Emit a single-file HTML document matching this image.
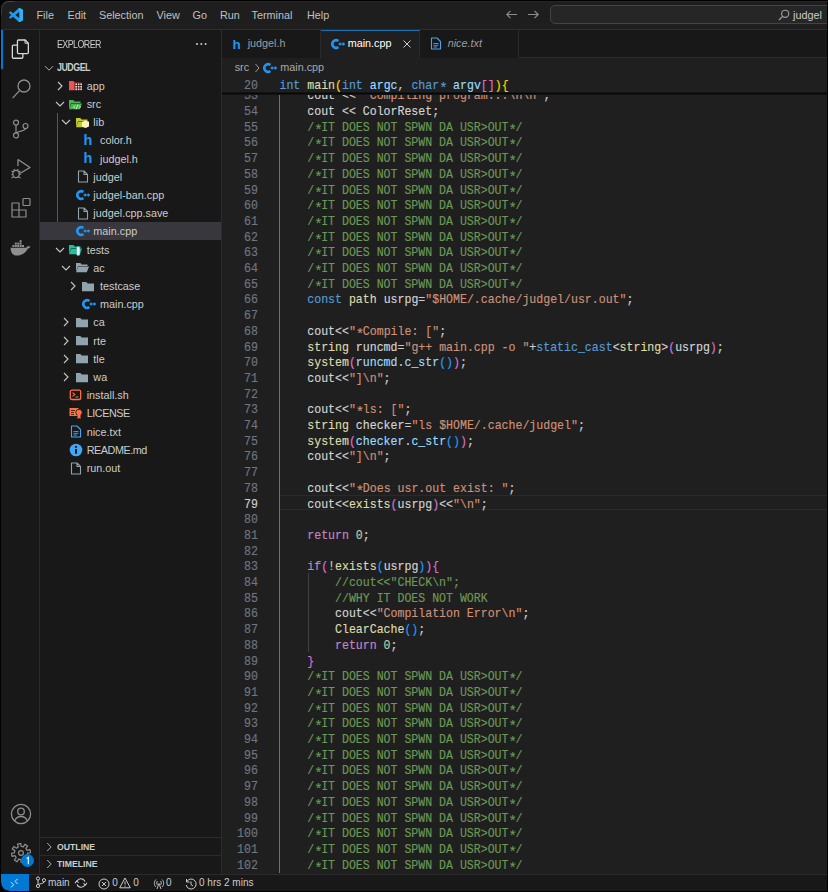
<!DOCTYPE html><html><head><meta charset="utf-8"><style>
*{margin:0;padding:0;box-sizing:border-box}
html,body{width:828px;height:892px;overflow:hidden;background:#000}
body{position:relative;font-family:"Liberation Sans",sans-serif;color:#ccc}
.a{position:absolute}
#win{position:absolute;left:0;top:0;width:827px;height:891px;border-radius:9px 0 0 9px;overflow:hidden;background:#181818}
#title{left:0;top:0;width:827px;height:29.7px;background:#1e1e1e;border-bottom:1px solid #2b2b2b}
.menu{top:0;height:29px;line-height:30px;font-size:10.8px;color:#c0c0c0;white-space:nowrap}
#act{left:0;top:29px;width:40px;height:845px;background:#181818;border-right:1px solid #2b2b2b}
#side{left:40px;top:29px;width:181.7px;height:845px;background:#181818;border-right:1px solid #2b2b2b}
#edit{left:221.7px;top:29px;width:606px;height:845px;background:#1f1f1f}
#tabs{left:0;top:0;width:606px;height:29px;background:#181818;border-bottom:1px solid #2b2b2b}
.tab{top:0;height:29px;background:#181818;border-right:1px solid #2b2b2b;font-size:10.8px;line-height:29px;white-space:nowrap}
#status{left:0;top:874px;width:827px;height:17px;background:#181818;border-top:1px solid #2b2b2b;font-size:10px;color:#ccc}
#status div.a{margin-top:-0.8px}
.row{position:absolute;left:0;width:181px;height:18.2px;line-height:18.2px;font-size:10.8px;color:#cccccc;white-space:nowrap}
.row span.t{position:absolute;top:0}
.code{position:absolute;left:57.8px;font-family:"Liberation Mono",monospace;font-size:11.57px;white-space:pre;color:#cccccc;height:15.73px;line-height:15.73px;transform:translateY(1.5px) scaleY(1.06);-webkit-text-stroke:0.15px}
.ln{position:absolute;left:0;width:36.3px;text-align:right;font-family:"Liberation Mono",monospace;font-size:11.6px;color:#6e7681;height:15.73px;line-height:15.73px;transform:translateY(1.4px) scaleY(1.1);-webkit-text-stroke:0.15px}
.k{color:#569cd6}.c{color:#c586c0}.s{color:#ce9178}.m{color:#6a9955}.n{color:#b5cea8}.f{color:#dcdcaa}.v{color:#9cdcfe}.d{color:#d4d4d4}
.as{position:relative;top:3.6px;font-size:14px;letter-spacing:-1.46px}
.b1{color:#ffd700}.b2{color:#da70d6}.b3{color:#179fff}
</style></head><body><div id="win"><div id="title" class="a"><svg class="a" style="left:8.7px;top:7.6px" width="14" height="14" viewBox="0 0 100 100"><path d="M96.46 10.8 L75.86 0.87 C73.48 -0.27 70.63 0.21 68.76 2.08 L29.35 38.04 L12.19 25.01 C10.59 23.8 8.35 23.9 6.87 25.25 L1.36 30.26 C-0.45 31.91 -0.46 34.76 1.35 36.42 L16.24 50 L1.35 63.58 C-0.46 65.24 -0.45 68.09 1.36 69.74 L6.87 74.75 C8.35 76.1 10.59 76.2 12.19 74.99 L29.35 61.96 L68.76 97.92 C70.63 99.79 73.48 100.27 75.86 99.13 L96.46 89.2 C98.62 88.16 100 85.97 100 83.57 V16.43 C100 14.03 98.62 11.84 96.46 10.8 Z M75.02 72.7 L45.11 50 L75.02 27.3 V72.7 Z" fill="#1a9bf0"/><path d="M96.46 10.8 L75.86 0.87 C73.48 -0.27 70.63 0.21 68.76 2.08 L75.02 27.3 V72.7 L68.76 97.92 C70.63 99.79 73.48 100.27 75.86 99.13 L96.46 89.2 C98.62 88.16 100 85.97 100 83.57 V16.43 C100 14.03 98.62 11.84 96.46 10.8 Z" fill="#35aef8"/></svg><div class="a menu" style="left:36.5px">File</div><div class="a menu" style="left:67.5px">Edit</div><div class="a menu" style="left:99px">Selection</div><div class="a menu" style="left:156.5px">View</div><div class="a menu" style="left:192.5px">Go</div><div class="a menu" style="left:220px">Run</div><div class="a menu" style="left:251.5px">Terminal</div><div class="a menu" style="left:307px">Help</div><svg class="a" style="left:504.5px;top:9.2px" width="14" height="12" viewBox="0 0 14 12" ><path d="M5.5 1.8 L1.8 5.5 L5.5 9.2 M1.8 5.5 H12" stroke="#8c8c8c" stroke-width="1.15" fill="none"/></svg><svg class="a" style="left:526px;top:9.2px" width="14" height="12" viewBox="0 0 14 12" ><path d="M8.5 1.8 L12.2 5.5 L8.5 9.2 M12.2 5.5 H2" stroke="#8c8c8c" stroke-width="1.15" fill="none"/></svg><div class="a" style="left:550px;top:5px;width:300px;height:19px;background:#262626;border:1.3px solid #434343;border-radius:5px;margin-top:-0.4px"></div><svg class="a" style="left:778px;top:9px" width="12" height="12" viewBox="0 0 12 12" ><circle cx="7.2" cy="4.8" r="3.6" stroke="#a0a0a0" stroke-width="1.1" fill="none"/><path d="M4.6 7.4 L1 11" stroke="#a0a0a0" stroke-width="1.2"/></svg><div class="a menu" style="left:793px;top:0;color:#cccccc">judgel</div></div><div id="act" class="a"><div class="a" style="left:1px;top:0px;width:2px;height:40px;background:#0078d4"></div><svg class="a" style="left:10px;top:9px" width="22" height="22" viewBox="0 0 22 22" ><path d="M7.45 3 a1 1 0 0 1 1 -1 H15.2 L18.35 5.2 V14.55 a1 1 0 0 1 -1 1 H8.45 a1 1 0 0 1 -1 -1 Z" stroke="#d7d7d7" stroke-width="1.3" fill="none"/><path d="M15 2 V4.2 a1 1 0 0 0 1 1 H18.3" stroke="#d7d7d7" stroke-width="1.1" fill="none"/><path d="M7.45 7.05 H3.35 a1 1 0 0 0 -1 1 V19.25 a1 1 0 0 0 1 1 H11.85 a1 1 0 0 0 1 -1 V15.6" stroke="#d7d7d7" stroke-width="1.3" fill="none"/></svg><svg class="a" style="left:10.5px;top:50px" width="22" height="22" viewBox="0 0 22 22" ><circle cx="13" cy="7" r="6" stroke="#8e8e8e" stroke-width="1.3" fill="none"/><path d="M8.8 11.4 L1.6 19.1" stroke="#8e8e8e" stroke-width="1.35"/></svg><svg class="a" style="left:11px;top:89.5px" width="20" height="20" viewBox="0 0 20 20" ><circle cx="5" cy="3.6" r="2.5" stroke="#8e8e8e" stroke-width="1.2" fill="none"/><circle cx="5" cy="16.4" r="2.5" stroke="#8e8e8e" stroke-width="1.2" fill="none"/><circle cx="14.5" cy="7" r="2.5" stroke="#8e8e8e" stroke-width="1.2" fill="none"/><path d="M5 6.1 V13.9 M14.5 9.5 C14.5 12.5 7 11.5 5.5 13.9" stroke="#8e8e8e" stroke-width="1.2" fill="none"/></svg><svg class="a" style="left:9.5px;top:129px" width="22" height="22" viewBox="0 0 22 22" ><path d="M8 1.5 L20 9.5 L9 16" stroke="#8e8e8e" stroke-width="1.3" fill="none" stroke-linejoin="round"/><path d="M8 1.5 V8" stroke="#8e8e8e" stroke-width="1.3"/><ellipse cx="6" cy="16" rx="3.2" ry="3.6" stroke="#8e8e8e" stroke-width="1.2" fill="none"/><path d="M1.5 13 L3.5 14 M1.5 16.5 H3 M1.5 20 L3.5 18.8 M10.5 13 L8.5 14 M10.5 16.5 H9 M10.5 20 L8.5 18.8 M4.5 12.2 L3.8 11 M7.5 12.2 L8.2 11" stroke="#8e8e8e" stroke-width="1.1"/></svg><svg class="a" style="left:9.5px;top:167.6px" width="22" height="22" viewBox="0 0 22 22" ><path d="M2 6 H9 V13 H2 Z M2 13 H9 V20 H2 Z M9 13 H16 V20 H9 Z" stroke="#8e8e8e" stroke-width="1.2" fill="none" stroke-linejoin="round"/><rect x="13" y="1.5" width="7" height="7" rx="0.8" stroke="#8e8e8e" stroke-width="1.2" fill="none"/></svg><svg class="a" style="left:10px;top:209px" width="21" height="18" viewBox="0 0 21 18" ><path d="M0.6 9.7 H16.4 C16.9 8.4 18.4 7.9 20.4 8.7 C19.9 9.9 18.9 10.5 17.9 10.6 C16 15.2 11 17.6 6.8 17.6 C2.6 17.6 0.6 14.2 0.6 9.7 Z" fill="#8e8e8e"/><rect x="9.6" y="2.2" width="2" height="2" fill="#8e8e8e"/><rect x="4.8" y="4.6" width="2" height="2" fill="#8e8e8e"/><rect x="7.2" y="4.6" width="2" height="2" fill="#8e8e8e"/><rect x="9.6" y="4.6" width="2" height="2" fill="#8e8e8e"/><rect x="2.4" y="7.0" width="2" height="2" fill="#8e8e8e"/><rect x="4.8" y="7.0" width="2" height="2" fill="#8e8e8e"/><rect x="7.2" y="7.0" width="2" height="2" fill="#8e8e8e"/><rect x="9.6" y="7.0" width="2" height="2" fill="#8e8e8e"/><rect x="12.0" y="7.0" width="2" height="2" fill="#8e8e8e"/></svg><svg class="a" style="left:9.5px;top:774px" width="22" height="22" viewBox="0 0 22 22" ><circle cx="11" cy="11" r="9.6" stroke="#8e8e8e" stroke-width="1.3" fill="none"/><circle cx="11" cy="8.5" r="3.3" stroke="#8e8e8e" stroke-width="1.3" fill="none"/><path d="M4.6 18 C6 14.5 8 13.5 11 13.5 C14 13.5 16 14.5 17.4 18" stroke="#8e8e8e" stroke-width="1.3" fill="none"/></svg><svg class="a" style="left:10.5px;top:814px" width="20" height="20" viewBox="0 0 20 20" ><path d="M18.96 6.56 L19.60 9.75 L16.60 10.17 L16.16 12.36 L18.77 13.91 L16.96 16.61 L14.54 14.79 L12.69 16.03 L13.44 18.96 L10.25 19.60 L9.83 16.60 L7.64 16.16 L6.09 18.77 L3.39 16.96 L5.21 14.54 L3.97 12.69 L1.04 13.44 L0.40 10.25 L3.40 9.83 L3.84 7.64 L1.23 6.09 L3.04 3.39 L5.46 5.21 L7.31 3.97 L6.56 1.04 L9.75 0.40 L10.17 3.40 L12.36 3.84 L13.91 1.23 L16.61 3.04 L14.79 5.46 L16.03 7.31 Z" stroke="#8e8e8e" stroke-width="1.2" fill="none" stroke-linejoin="round"/><circle cx="10" cy="10" r="2.4" stroke="#8e8e8e" stroke-width="1.2" fill="none"/></svg><div class="a" style="left:20.6px;top:824.5px;width:13.5px;height:13.5px;border-radius:50%;background:#0078d4"></div><svg class="a" style="left:20.6px;top:824.5px" width="13.5" height="13.5" viewBox="0 0 13.5 13.5" ><path d="M5.6 4.6 L7.3 3.4 V10.2" stroke="#fff" stroke-width="1.1" fill="none"/></svg></div><div id="side" class="a"><div class="a" style="left:17px;top:9.2px;font-size:8.9px;letter-spacing:-0.55px;line-height:14px;color:#cccccc;transform:scaleY(1.13)">EXPLORER</div><div class="a" style="left:156.3px;top:14.3px;width:2.2px;height:2.2px;background:#ccc;border-radius:50%;box-shadow:4.3px 0 0 #ccc,8.6px 0 0 #ccc"></div><div class="a" style="left:17px;top:30.8px;font-size:8.9px;letter-spacing:-0.5px;line-height:14px;font-weight:bold;color:#cccccc;transform:translateY(1px) scaleY(1.13)">JUDGEL</div><svg class="a" style="left:4px;top:33.5px" width="10" height="10" viewBox="0 0 10 10" ><path d="M1 3.2 L5 7.2 L9 3.2" stroke="#b8b8b8" stroke-width="0.95" fill="none"/></svg><div class="a" style="left:17.4px;top:83.6px;width:1px;height:127.4px;background:#585858"></div><div class="row" style="top:47.70px;"><span class="t" style="left:46.70px;">app</span></div><svg class="a" style="left:14.7px;top:51.800000000000004px" width="10" height="10" viewBox="0 0 10 10" ><path d="M3 1 L7 5 L3 9" stroke="#c5c5c5" stroke-width="1.1" fill="none"/></svg><svg class="a" style="left:28.0px;top:50.300000000000004px" width="15" height="13" viewBox="0 0 15 13" ><path d="M1 2 H5.3 L6.7 3.4 H13 V11.3 H1 Z" fill="#ef5350"/><rect x="6.6" y="3.6" width="7.4" height="8" fill="#181818"/><rect x="7.3" y="4.4" width="1.7" height="1.7" fill="#f4d6d5"/><rect x="7.3" y="6.9" width="1.7" height="1.7" fill="#f4d6d5"/><rect x="7.3" y="9.4" width="1.7" height="1.7" fill="#f4d6d5"/><rect x="9.8" y="4.4" width="1.7" height="1.7" fill="#f4d6d5"/><rect x="9.8" y="6.9" width="1.7" height="1.7" fill="#f4d6d5"/><rect x="9.8" y="9.4" width="1.7" height="1.7" fill="#f4d6d5"/><rect x="12.3" y="4.4" width="1.7" height="1.7" fill="#f4d6d5"/><rect x="12.3" y="6.9" width="1.7" height="1.7" fill="#f4d6d5"/><rect x="12.3" y="9.4" width="1.7" height="1.7" fill="#f4d6d5"/></svg><div class="row" style="top:65.90px;"><span class="t" style="left:46.70px;">src</span></div><svg class="a" style="left:14.7px;top:70.0px" width="10" height="10" viewBox="0 0 10 10" ><path d="M1 3 L5 7 L9 3" stroke="#c5c5c5" stroke-width="1.1" fill="none"/></svg><svg class="a" style="left:28.0px;top:68.5px" width="15" height="13" viewBox="0 0 15 13" ><path d="M1 2 H5.3 L6.7 3.4 H12.5 V5 H3.2 L1 10.8 Z" fill="#4caf50"/><path d="M3.3 5.6 H14 L11.8 11.3 H1 Z" fill="#4caf50"/><path d="M7 7.5 L5.5 9 L7 10.5 M11 7.5 L12.5 9 L11 10.5 M9.8 6.8 L8.2 11.2" stroke="#c8f5c8" stroke-width="1" fill="none"/></svg><div class="row" style="top:84.10px;"><span class="t" style="left:53.35px;">lib</span></div><svg class="a" style="left:21.349999999999998px;top:88.19999999999999px" width="10" height="10" viewBox="0 0 10 10" ><path d="M1 3 L5 7 L9 3" stroke="#c5c5c5" stroke-width="1.1" fill="none"/></svg><svg class="a" style="left:34.65px;top:86.69999999999999px" width="15" height="13" viewBox="0 0 15 13" ><path d="M1 2 H5.3 L6.7 3.4 H12.5 V5 H3.2 L1 10.8 Z" fill="#c0ca33"/><path d="M3.3 5.6 H14 L11.8 11.3 H1 Z" fill="#c0ca33"/><path d="M7 6 L10.5 4.5 L14 6 V10.5 L10.5 12 L7 10.5 Z" fill="#fff3c4"/></svg><div class="row" style="top:102.30px;"><span class="t" style="left:60.00px;">color.h</span></div><div class="a" style="left:43.599999999999994px;top:102.8px;font-size:14.5px;line-height:17px;font-weight:bold;color:#2196f3">h</div><div class="row" style="top:120.50px;"><span class="t" style="left:60.00px;">judgel.h</span></div><div class="a" style="left:43.599999999999994px;top:121.0px;font-size:14.5px;line-height:17px;font-weight:bold;color:#2196f3">h</div><div class="row" style="top:138.70px;"><span class="t" style="left:53.35px;">judgel</span></div><svg class="a" style="left:36.65px;top:141.29999999999998px" width="12" height="13" viewBox="0 0 12 13" ><path d="M1.5 1 H7 L10.5 4.5 V12 H1.5 Z M7 1 V4.5 H10.5" stroke="#90a4ae" stroke-width="1.1" fill="none" stroke-linejoin="round"/></svg><div class="row" style="top:156.90px;"><span class="t" style="left:53.35px;">judgel-ban.cpp</span></div><svg class="a" style="left:35.65px;top:159.99999999999997px" width="14" height="12" viewBox="0 0 14 12" ><path d="M7.4 3.1 A3.7 3.7 0 1 0 7.4 8.9" stroke="#2196f3" stroke-width="2.6" fill="none"/><path d="M7.6 6 H10.6 M9.1 4.5 V7.5 M10.9 6 H13.9 M12.4 4.5 V7.5" stroke="#2196f3" stroke-width="1.3"/></svg><div class="row" style="top:175.10px;"><span class="t" style="left:53.35px;">judgel.cpp.save</span></div><svg class="a" style="left:36.65px;top:177.7px" width="12" height="13" viewBox="0 0 12 13" ><path d="M1.5 1 H7 L10.5 4.5 V12 H1.5 Z M7 1 V4.5 H10.5" stroke="#90a4ae" stroke-width="1.1" fill="none" stroke-linejoin="round"/></svg><div class="row" style="top:193.30px;background:#37373d;"><span class="t" style="left:53.35px;">main.cpp</span></div><svg class="a" style="left:35.65px;top:196.4px" width="14" height="12" viewBox="0 0 14 12" ><path d="M7.4 3.1 A3.7 3.7 0 1 0 7.4 8.9" stroke="#2196f3" stroke-width="2.6" fill="none"/><path d="M7.6 6 H10.6 M9.1 4.5 V7.5 M10.9 6 H13.9 M12.4 4.5 V7.5" stroke="#2196f3" stroke-width="1.3"/></svg><div class="row" style="top:211.50px;"><span class="t" style="left:46.70px;">tests</span></div><svg class="a" style="left:14.7px;top:215.6px" width="10" height="10" viewBox="0 0 10 10" ><path d="M1 3 L5 7 L9 3" stroke="#c5c5c5" stroke-width="1.1" fill="none"/></svg><svg class="a" style="left:28.0px;top:214.1px" width="15" height="13" viewBox="0 0 15 13" ><path d="M1 2 H5.3 L6.7 3.4 H12.5 V5 H3.2 L1 10.8 Z" fill="#22bf9c"/><path d="M3.3 5.6 H14 L11.8 11.3 H1 Z" fill="#22bf9c"/><rect x="8.5" y="3.5" width="3.5" height="9" rx="1.5" fill="#e0f7fa" stroke="#26a69a" stroke-width="0.6"/></svg><div class="row" style="top:229.70px;"><span class="t" style="left:53.35px;">ac</span></div><svg class="a" style="left:21.349999999999998px;top:233.79999999999998px" width="10" height="10" viewBox="0 0 10 10" ><path d="M1 3 L5 7 L9 3" stroke="#c5c5c5" stroke-width="1.1" fill="none"/></svg><svg class="a" style="left:34.65px;top:232.29999999999998px" width="15" height="13" viewBox="0 0 15 13" ><path d="M1 2 H5.3 L6.7 3.4 H12.5 V5 H3.2 L1 10.8 Z" fill="#90a4ae"/><path d="M3.3 5.6 H14 L11.8 11.3 H1 Z" fill="#90a4ae"/></svg><div class="row" style="top:247.90px;"><span class="t" style="left:60.00px;">testcase</span></div><svg class="a" style="left:28.0px;top:252.0px" width="10" height="10" viewBox="0 0 10 10" ><path d="M3 1 L7 5 L3 9" stroke="#c5c5c5" stroke-width="1.1" fill="none"/></svg><svg class="a" style="left:41.3px;top:250.5px" width="15" height="13" viewBox="0 0 15 13" ><path d="M1 2 H5.3 L6.7 3.4 H13 V11.3 H1 Z" fill="#90a4ae"/></svg><div class="row" style="top:266.10px;"><span class="t" style="left:60.00px;">main.cpp</span></div><svg class="a" style="left:42.3px;top:269.2px" width="14" height="12" viewBox="0 0 14 12" ><path d="M7.4 3.1 A3.7 3.7 0 1 0 7.4 8.9" stroke="#2196f3" stroke-width="2.6" fill="none"/><path d="M7.6 6 H10.6 M9.1 4.5 V7.5 M10.9 6 H13.9 M12.4 4.5 V7.5" stroke="#2196f3" stroke-width="1.3"/></svg><div class="row" style="top:284.30px;"><span class="t" style="left:53.35px;">ca</span></div><svg class="a" style="left:21.349999999999998px;top:288.40000000000003px" width="10" height="10" viewBox="0 0 10 10" ><path d="M3 1 L7 5 L3 9" stroke="#c5c5c5" stroke-width="1.1" fill="none"/></svg><svg class="a" style="left:34.65px;top:286.90000000000003px" width="15" height="13" viewBox="0 0 15 13" ><path d="M1 2 H5.3 L6.7 3.4 H13 V11.3 H1 Z" fill="#90a4ae"/></svg><div class="row" style="top:302.50px;"><span class="t" style="left:53.35px;">rte</span></div><svg class="a" style="left:21.349999999999998px;top:306.6px" width="10" height="10" viewBox="0 0 10 10" ><path d="M3 1 L7 5 L3 9" stroke="#c5c5c5" stroke-width="1.1" fill="none"/></svg><svg class="a" style="left:34.65px;top:305.1px" width="15" height="13" viewBox="0 0 15 13" ><path d="M1 2 H5.3 L6.7 3.4 H13 V11.3 H1 Z" fill="#90a4ae"/></svg><div class="row" style="top:320.70px;"><span class="t" style="left:53.35px;">tle</span></div><svg class="a" style="left:21.349999999999998px;top:324.8px" width="10" height="10" viewBox="0 0 10 10" ><path d="M3 1 L7 5 L3 9" stroke="#c5c5c5" stroke-width="1.1" fill="none"/></svg><svg class="a" style="left:34.65px;top:323.3px" width="15" height="13" viewBox="0 0 15 13" ><path d="M1 2 H5.3 L6.7 3.4 H13 V11.3 H1 Z" fill="#90a4ae"/></svg><div class="row" style="top:338.90px;"><span class="t" style="left:53.35px;">wa</span></div><svg class="a" style="left:21.349999999999998px;top:343.0px" width="10" height="10" viewBox="0 0 10 10" ><path d="M3 1 L7 5 L3 9" stroke="#c5c5c5" stroke-width="1.1" fill="none"/></svg><svg class="a" style="left:34.65px;top:341.5px" width="15" height="13" viewBox="0 0 15 13" ><path d="M1 2 H5.3 L6.7 3.4 H13 V11.3 H1 Z" fill="#90a4ae"/></svg><div class="row" style="top:357.10px;"><span class="t" style="left:46.70px;">install.sh</span></div><svg class="a" style="left:29.0px;top:359.59999999999997px" width="14" height="12" viewBox="0 0 14 12" ><rect x="1.3" y="1.2" width="10.4" height="9.3" rx="1.6" stroke="#ff7043" stroke-width="1.3" fill="none"/><path d="M3.6 3.6 L5.8 5.5 L3.6 7.4 M6.6 8 H9.4" stroke="#ff7043" stroke-width="1.2" fill="none"/></svg><div class="row" style="top:375.30px;"><span class="t" style="left:46.70px;letter-spacing:-0.45px;">LICENSE</span></div><svg class="a" style="left:29.0px;top:377.9px" width="14" height="13" viewBox="0 0 14 13" ><rect x="0.5" y="1" width="9" height="8" fill="#ff7043"/><path d="M2 3.5 H6 M2 5.5 H5 M2 7.5 H5" stroke="#181818" stroke-width="0.8"/><circle cx="10" cy="5.5" r="3.2" fill="#ff7043" stroke="#181818" stroke-width="0.8"/><path d="M8.5 8 L8.5 12 L10 11 L11.5 12 V8" fill="#ff7043"/></svg><div class="row" style="top:393.50px;"><span class="t" style="left:46.70px;">nice.txt</span></div><svg class="a" style="left:30.0px;top:396.1px" width="12" height="13" viewBox="0 0 12 13" ><path d="M1.5 1 H7 L10.5 4.5 V12 H1.5 Z" stroke="#42a5f5" stroke-width="1.1" fill="none" stroke-linejoin="round"/><path d="M3.5 6.5 H8.5 M3.5 8.3 H8.5 M3.5 10 H7" stroke="#42a5f5" stroke-width="0.9"/></svg><div class="row" style="top:411.70px;"><span class="t" style="left:46.70px;letter-spacing:-0.45px;">README.md</span></div><svg class="a" style="left:29.0px;top:413.8px" width="14" height="14" viewBox="0 0 14 14" ><circle cx="7" cy="7" r="6.3" fill="#42a5f5"/><circle cx="7" cy="3.9" r="1.1" fill="#181818"/><path d="M7 6 V10.8" stroke="#181818" stroke-width="2"/></svg><div class="row" style="top:429.90px;"><span class="t" style="left:46.70px;">run.out</span></div><svg class="a" style="left:30.0px;top:432.5px" width="12" height="13" viewBox="0 0 12 13" ><path d="M1.5 1 H7 L10.5 4.5 V12 H1.5 Z M7 1 V4.5 H10.5" stroke="#90a4ae" stroke-width="1.1" fill="none" stroke-linejoin="round"/></svg><div class="a" style="left:0;top:808px;width:181px;height:1px;background:#2b2b2b"></div><div class="a" style="left:0;top:826px;width:181px;height:1px;background:#2b2b2b"></div><svg class="a" style="left:3.5px;top:813px" width="10" height="10" viewBox="0 0 10 10" ><path d="M3.2 1 L7.2 5 L3.2 9" stroke="#b8b8b8" stroke-width="0.95" fill="none"/></svg><svg class="a" style="left:3.5px;top:830px" width="10" height="10" viewBox="0 0 10 10" ><path d="M3.2 1 L7.2 5 L3.2 9" stroke="#b8b8b8" stroke-width="0.95" fill="none"/></svg><div class="a" style="left:17px;top:811px;font-size:8.7px;line-height:14px;font-weight:bold;color:#cccccc">OUTLINE</div><div class="a" style="left:17px;top:828px;font-size:8.7px;line-height:14px;font-weight:bold;color:#cccccc">TIMELINE</div></div><div id="edit" class="a"><div id="tabs" class="a"><div class="a tab" style="left:0;width:99px"></div><div class="a" style="left:10.8px;top:6.5px;font-size:13.5px;line-height:17px;font-weight:bold;color:#2196f3">h</div><div class="a" style="left:26px;top:0;font-size:10.8px;line-height:29px;color:#9d9d9d">judgel.h</div><div class="a tab" style="left:99px;width:99px;background:#1f1f1f;height:29px;border-bottom:1px solid #1f1f1f"></div><div class="a" style="left:99px;top:0.2px;width:99px;height:1.7px;background:#1a6cb5"></div><svg class="a" style="left:109px;top:8.5px" width="14" height="12" viewBox="0 0 14 12" ><path d="M7.4 3.1 A3.7 3.7 0 1 0 7.4 8.9" stroke="#2196f3" stroke-width="2.6" fill="none"/><path d="M7.6 6 H10.6 M9.1 4.5 V7.5 M10.9 6 H13.9 M12.4 4.5 V7.5" stroke="#2196f3" stroke-width="1.3"/></svg><div class="a" style="left:126px;top:0;font-size:10.8px;line-height:29px;color:#ffffff">main.cpp</div><svg class="a" style="left:180.5px;top:9.8px" width="10" height="10" viewBox="0 0 10 10" ><path d="M1.5 1.5 L8.5 8.5 M8.5 1.5 L1.5 8.5" stroke="#cccccc" stroke-width="1"/></svg><div class="a tab" style="left:198px;width:99px"></div><svg class="a" style="left:208px;top:8px" width="12" height="13" viewBox="0 0 12 13" ><path d="M1.5 1 H7 L10.5 4.5 V12 H1.5 Z" stroke="#42a5f5" stroke-width="1.1" fill="none" stroke-linejoin="round"/><path d="M3.5 6.5 H8.5 M3.5 8.3 H8.5 M3.5 10 H7" stroke="#42a5f5" stroke-width="0.9"/></svg><div class="a" style="left:226px;top:0;font-size:10.8px;line-height:29px;color:#9d9d9d;font-style:italic">nice.txt</div></div><div class="a" style="left:13px;top:29px;font-size:10.8px;line-height:18px;color:#a9a9a9">src</div><svg class="a" style="left:31px;top:33.5px" width="8" height="10" viewBox="0 0 8 10" ><path d="M2.5 1 L6 5 L2.5 9" stroke="#a9a9a9" stroke-width="0.9" fill="none"/></svg><svg class="a" style="left:41.5px;top:32.5px" width="14" height="12" viewBox="0 0 14 12" ><path d="M7.4 3.1 A3.7 3.7 0 1 0 7.4 8.9" stroke="#2196f3" stroke-width="2.6" fill="none"/><path d="M7.6 6 H10.6 M9.1 4.5 V7.5 M10.9 6 H13.9 M12.4 4.5 V7.5" stroke="#2196f3" stroke-width="1.3"/></svg><div class="a" style="left:58.6px;top:29px;font-size:10.8px;line-height:18px;color:#a9a9a9">main.cpp</div><div class="a" style="left:0;top:47.3px;width:606px;height:797.7px;overflow:hidden"><div class="ln" style="top:10.10px;color:#6e7681">53</div><div class="code" style="top:10.10px">    <span class="d">cout</span> &lt;&lt; <span class="s">"Compiling program...\n\n"</span>;</div><div class="ln" style="top:25.80px;color:#6e7681">54</div><div class="code" style="top:25.80px">    <span class="d">cout</span> &lt;&lt; <span class="d">ColorReset</span>;</div><div class="ln" style="top:41.50px;color:#6e7681">55</div><div class="code" style="top:41.50px">    <span class="m">/<span class="as">*</span>IT DOES NOT SPWN DA USR&gt;OUT<span class="as">*</span>/</span></div><div class="ln" style="top:57.20px;color:#6e7681">56</div><div class="code" style="top:57.20px">    <span class="m">/<span class="as">*</span>IT DOES NOT SPWN DA USR&gt;OUT<span class="as">*</span>/</span></div><div class="ln" style="top:72.90px;color:#6e7681">57</div><div class="code" style="top:72.90px">    <span class="m">/<span class="as">*</span>IT DOES NOT SPWN DA USR&gt;OUT<span class="as">*</span>/</span></div><div class="ln" style="top:88.60px;color:#6e7681">58</div><div class="code" style="top:88.60px">    <span class="m">/<span class="as">*</span>IT DOES NOT SPWN DA USR&gt;OUT<span class="as">*</span>/</span></div><div class="ln" style="top:104.30px;color:#6e7681">59</div><div class="code" style="top:104.30px">    <span class="m">/<span class="as">*</span>IT DOES NOT SPWN DA USR&gt;OUT<span class="as">*</span>/</span></div><div class="ln" style="top:120.00px;color:#6e7681">60</div><div class="code" style="top:120.00px">    <span class="m">/<span class="as">*</span>IT DOES NOT SPWN DA USR&gt;OUT<span class="as">*</span>/</span></div><div class="ln" style="top:135.70px;color:#6e7681">61</div><div class="code" style="top:135.70px">    <span class="m">/<span class="as">*</span>IT DOES NOT SPWN DA USR&gt;OUT<span class="as">*</span>/</span></div><div class="ln" style="top:151.40px;color:#6e7681">62</div><div class="code" style="top:151.40px">    <span class="m">/<span class="as">*</span>IT DOES NOT SPWN DA USR&gt;OUT<span class="as">*</span>/</span></div><div class="ln" style="top:167.10px;color:#6e7681">63</div><div class="code" style="top:167.10px">    <span class="m">/<span class="as">*</span>IT DOES NOT SPWN DA USR&gt;OUT<span class="as">*</span>/</span></div><div class="ln" style="top:182.80px;color:#6e7681">64</div><div class="code" style="top:182.80px">    <span class="m">/<span class="as">*</span>IT DOES NOT SPWN DA USR&gt;OUT<span class="as">*</span>/</span></div><div class="ln" style="top:198.50px;color:#6e7681">65</div><div class="code" style="top:198.50px">    <span class="m">/<span class="as">*</span>IT DOES NOT SPWN DA USR&gt;OUT<span class="as">*</span>/</span></div><div class="ln" style="top:214.20px;color:#6e7681">66</div><div class="code" style="top:214.20px">    <span class="k">const</span> <span class="f">path</span> <span class="d">usrpg</span>=<span class="s">"$HOME/.cache/judgel/usr.out"</span>;</div><div class="ln" style="top:229.90px;color:#6e7681">67</div><div class="code" style="top:229.90px"></div><div class="ln" style="top:245.60px;color:#6e7681">68</div><div class="code" style="top:245.60px">    <span class="d">cout</span>&lt;&lt;<span class="s">"<span class="as">*</span>Compile: ["</span>;</div><div class="ln" style="top:261.30px;color:#6e7681">69</div><div class="code" style="top:261.30px">    <span class="f">string</span> <span class="d">runcmd</span>=<span class="s">"g++ main.cpp -o "</span>+<span class="k">static_cast</span>&lt;<span class="f">string</span>&gt;<span class="b2">(</span><span class="d">usrpg</span><span class="b2">)</span>;</div><div class="ln" style="top:277.00px;color:#6e7681">70</div><div class="code" style="top:277.00px">    <span class="f">system</span><span class="b2">(</span><span class="v">runcmd</span>.<span class="v">c_str</span><span class="b3">()</span><span class="b2">)</span>;</div><div class="ln" style="top:292.70px;color:#6e7681">71</div><div class="code" style="top:292.70px">    <span class="d">cout</span>&lt;&lt;<span class="s">"]\n"</span>;</div><div class="ln" style="top:308.40px;color:#6e7681">72</div><div class="code" style="top:308.40px"></div><div class="ln" style="top:324.10px;color:#6e7681">73</div><div class="code" style="top:324.10px">    <span class="d">cout</span>&lt;&lt;<span class="s">"<span class="as">*</span>ls: ["</span>;</div><div class="ln" style="top:339.80px;color:#6e7681">74</div><div class="code" style="top:339.80px">    <span class="f">string</span> <span class="d">checker</span>=<span class="s">"ls $HOME/.cache/judgel"</span>;</div><div class="ln" style="top:355.50px;color:#6e7681">75</div><div class="code" style="top:355.50px">    <span class="f">system</span><span class="b2">(</span><span class="v">checker</span>.<span class="v">c_str</span><span class="b3">()</span><span class="b2">)</span>;</div><div class="ln" style="top:371.20px;color:#6e7681">76</div><div class="code" style="top:371.20px">    <span class="d">cout</span>&lt;&lt;<span class="s">"]\n"</span>;</div><div class="ln" style="top:386.90px;color:#6e7681">77</div><div class="code" style="top:386.90px"></div><div class="ln" style="top:402.60px;color:#6e7681">78</div><div class="code" style="top:402.60px">    <span class="d">cout</span>&lt;&lt;<span class="s">"<span class="as">*</span>Does usr.out exist: "</span>;</div><div class="a" style="left:57.8px;top:418.50px;width:549px;height:15.50px;border:1px solid #2a2a2a"></div><div class="ln" style="top:418.30px;color:#cccccc">79</div><div class="code" style="top:418.30px">    <span class="d">cout</span>&lt;&lt;<span class="f">exists</span><span class="b2">(</span><span class="d">usrpg</span><span class="b2">)</span>&lt;&lt;<span class="s">"\n"</span>;</div><div class="ln" style="top:434.00px;color:#6e7681">80</div><div class="code" style="top:434.00px"></div><div class="ln" style="top:449.70px;color:#6e7681">81</div><div class="code" style="top:449.70px">    <span class="c">return</span> <span class="n">0</span>;</div><div class="ln" style="top:465.40px;color:#6e7681">82</div><div class="code" style="top:465.40px"></div><div class="ln" style="top:481.10px;color:#6e7681">83</div><div class="code" style="top:481.10px">    <span class="c">if</span><span class="b2">(</span>!<span class="f">exists</span><span class="b3">(</span><span class="d">usrpg</span><span class="b3">)</span><span class="b2">)</span><span class="b2">{</span></div><div class="ln" style="top:496.80px;color:#6e7681">84</div><div class="code" style="top:496.80px">        <span class="m">//cout&lt;&lt;"CHECK\n";</span></div><div class="ln" style="top:512.50px;color:#6e7681">85</div><div class="code" style="top:512.50px">        <span class="m">//WHY IT DOES NOT WORK</span></div><div class="ln" style="top:528.20px;color:#6e7681">86</div><div class="code" style="top:528.20px">        <span class="d">cout</span>&lt;&lt;<span class="s">"Compilation Error\n"</span>;</div><div class="ln" style="top:543.90px;color:#6e7681">87</div><div class="code" style="top:543.90px">        <span class="f">ClearCache</span><span class="b3">()</span>;</div><div class="ln" style="top:559.60px;color:#6e7681">88</div><div class="code" style="top:559.60px">        <span class="c">return</span> <span class="n">0</span>;</div><div class="ln" style="top:575.30px;color:#6e7681">89</div><div class="code" style="top:575.30px">    <span class="b2">}</span></div><div class="ln" style="top:591.00px;color:#6e7681">90</div><div class="code" style="top:591.00px">    <span class="m">/<span class="as">*</span>IT DOES NOT SPWN DA USR&gt;OUT<span class="as">*</span>/</span></div><div class="ln" style="top:606.70px;color:#6e7681">91</div><div class="code" style="top:606.70px">    <span class="m">/<span class="as">*</span>IT DOES NOT SPWN DA USR&gt;OUT<span class="as">*</span>/</span></div><div class="ln" style="top:622.40px;color:#6e7681">92</div><div class="code" style="top:622.40px">    <span class="m">/<span class="as">*</span>IT DOES NOT SPWN DA USR&gt;OUT<span class="as">*</span>/</span></div><div class="ln" style="top:638.10px;color:#6e7681">93</div><div class="code" style="top:638.10px">    <span class="m">/<span class="as">*</span>IT DOES NOT SPWN DA USR&gt;OUT<span class="as">*</span>/</span></div><div class="ln" style="top:653.80px;color:#6e7681">94</div><div class="code" style="top:653.80px">    <span class="m">/<span class="as">*</span>IT DOES NOT SPWN DA USR&gt;OUT<span class="as">*</span>/</span></div><div class="ln" style="top:669.50px;color:#6e7681">95</div><div class="code" style="top:669.50px">    <span class="m">/<span class="as">*</span>IT DOES NOT SPWN DA USR&gt;OUT<span class="as">*</span>/</span></div><div class="ln" style="top:685.20px;color:#6e7681">96</div><div class="code" style="top:685.20px">    <span class="m">/<span class="as">*</span>IT DOES NOT SPWN DA USR&gt;OUT<span class="as">*</span>/</span></div><div class="ln" style="top:700.90px;color:#6e7681">97</div><div class="code" style="top:700.90px">    <span class="m">/<span class="as">*</span>IT DOES NOT SPWN DA USR&gt;OUT<span class="as">*</span>/</span></div><div class="ln" style="top:716.60px;color:#6e7681">98</div><div class="code" style="top:716.60px">    <span class="m">/<span class="as">*</span>IT DOES NOT SPWN DA USR&gt;OUT<span class="as">*</span>/</span></div><div class="ln" style="top:732.30px;color:#6e7681">99</div><div class="code" style="top:732.30px">    <span class="m">/<span class="as">*</span>IT DOES NOT SPWN DA USR&gt;OUT<span class="as">*</span>/</span></div><div class="ln" style="top:748.00px;color:#6e7681">100</div><div class="code" style="top:748.00px">    <span class="m">/<span class="as">*</span>IT DOES NOT SPWN DA USR&gt;OUT<span class="as">*</span>/</span></div><div class="ln" style="top:763.70px;color:#6e7681">101</div><div class="code" style="top:763.70px">    <span class="m">/<span class="as">*</span>IT DOES NOT SPWN DA USR&gt;OUT<span class="as">*</span>/</span></div><div class="ln" style="top:779.40px;color:#6e7681">102</div><div class="code" style="top:779.40px">    <span class="m">/<span class="as">*</span>IT DOES NOT SPWN DA USR&gt;OUT<span class="as">*</span>/</span></div><div class="a" style="left:57.8px;top:0;width:1px;height:797px;background:#707070"></div><div class="a" style="left:86.3px;top:496.80px;width:1px;height:78.50px;background:#404040"></div><div class="a" style="left:0;top:0;width:606px;height:15.73px;background:#1f1f1f"></div><div class="a" style="left:0;top:15.6px;width:606px;height:3px;background:linear-gradient(#1f1f1f 0%,#070707 35%,#070707 65%,#1f1f1f 100%)"></div><div class="ln" style="top:0;color:#6e7681">20</div><div class="code" style="top:0"><span class="k">int</span> <span class="f">main</span><span class="b1">(</span><span class="k">int</span> <span class="v">argc</span>, <span class="k">char</span><span class="k as">*</span> <span class="v">argv</span><span class="b2">[]</span><span class="b1">)</span><span class="b1">{</span></div></div></div><div id="status" class="a"><div class="a" style="left:0.8px;top:-0.3px;width:28.2px;height:17.6px;background:#0078d4;border-bottom-left-radius:9px"></div><svg class="a" style="left:9.4px;top:1.6px" width="12" height="12" viewBox="0 0 12 12" ><path d="M2 5.2 L4.6 7.8 L2 10.4 M8.6 1.8 L6 4.4 L8.6 7" stroke="#e8f2fb" stroke-width="0.95" fill="none"/></svg><svg class="a" style="left:34.5px;top:1.2px" width="12" height="12" viewBox="0 0 12 12" ><circle cx="3" cy="2.5" r="1.6" stroke="#cccccc" stroke-width="1" fill="none"/><circle cx="3" cy="10" r="1.6" stroke="#cccccc" stroke-width="1" fill="none"/><circle cx="9" cy="4.2" r="1.6" stroke="#cccccc" stroke-width="1" fill="none"/><path d="M3 4 V8.4 M9 5.8 C9 8 4 7.5 3.5 8.6" stroke="#cccccc" stroke-width="1" fill="none"/></svg><div class="a" style="left:48px;top:0;line-height:17px">main</div><svg class="a" style="left:73.5px;top:2.2px" width="14" height="12" viewBox="0 0 14 12" ><path d="M3 4.2 A4.3 4.3 0 0 1 11 4.6 M11 7.8 A4.3 4.3 0 0 1 3 7.4" stroke="#cccccc" stroke-width="1.05" fill="none"/><path d="M1 6.2 L2.5 4 L4.6 5.6" stroke="#cccccc" stroke-width="1.05" fill="none"/><path d="M13 5.8 L11.5 8 L9.4 6.4" stroke="#cccccc" stroke-width="1.05" fill="none"/></svg><svg class="a" style="left:98px;top:2.5px" width="12" height="12" viewBox="0 0 12 12" ><circle cx="6" cy="6" r="5" stroke="#cccccc" stroke-width="1" fill="none"/><path d="M4 4 L8 8 M8 4 L4 8" stroke="#cccccc" stroke-width="1"/></svg><div class="a" style="left:112.3px;top:0;line-height:17px">0</div><svg class="a" style="left:119px;top:2px" width="12" height="12" viewBox="0 0 12 12" ><path d="M6 1 L11.3 10.8 H0.7 Z" stroke="#cccccc" stroke-width="1" fill="none" stroke-linejoin="round"/><path d="M6 4.5 V7.5 M6 8.6 V9.6" stroke="#cccccc" stroke-width="1"/></svg><div class="a" style="left:133.3px;top:0;line-height:17px">0</div><svg class="a" style="left:153px;top:2.5px" width="12" height="12" viewBox="0 0 12 12" ><path d="M3 1.5 C0.8 3.5 0.8 7 3 9 M9 1.5 C11.2 3.5 11.2 7 9 9 M4.5 3 C3.5 4 3.5 6 4.5 7 M7.5 3 C8.5 4 8.5 6 7.5 7 M6 5.5 L4 11 M6 5.5 L8 11" stroke="#cccccc" stroke-width="0.9" fill="none"/></svg><div class="a" style="left:166px;top:0;line-height:17px">0</div><svg class="a" style="left:185px;top:2.5px" width="12" height="12" viewBox="0 0 12 12" ><path d="M1.8 3.5 A5 5 0 1 1 1.2 7" stroke="#cccccc" stroke-width="1" fill="none"/><path d="M1.5 1 V4 H4.5" stroke="#cccccc" stroke-width="1" fill="none"/><path d="M6 3.5 V6.5 L8 8" stroke="#cccccc" stroke-width="1" fill="none"/></svg><div class="a" style="left:199px;top:0;line-height:17px">0 hrs 2 mins</div></div><div class="a" style="left:0;top:28.6px;width:827px;height:1.1px;background:#2e2e2e"></div></div><div class="a" style="left:0;top:0;width:828px;height:892px;border-radius:9px 0 0 10px;border:1px solid #000;pointer-events:none"></div><div class="a" style="left:1px;top:1px;width:830px;height:12px;border-radius:8px 0 0 0;border-top:1px solid #262626;border-left:1px solid #222;pointer-events:none"></div><div class="a" style="left:1px;top:1px;width:14px;height:14px;border-radius:8px 0 0 0;border-top:1px solid #484848;border-left:1px solid #3a3a3a;pointer-events:none;-webkit-mask-image:linear-gradient(135deg,#000 40%,transparent 75%)"></div></body></html>
